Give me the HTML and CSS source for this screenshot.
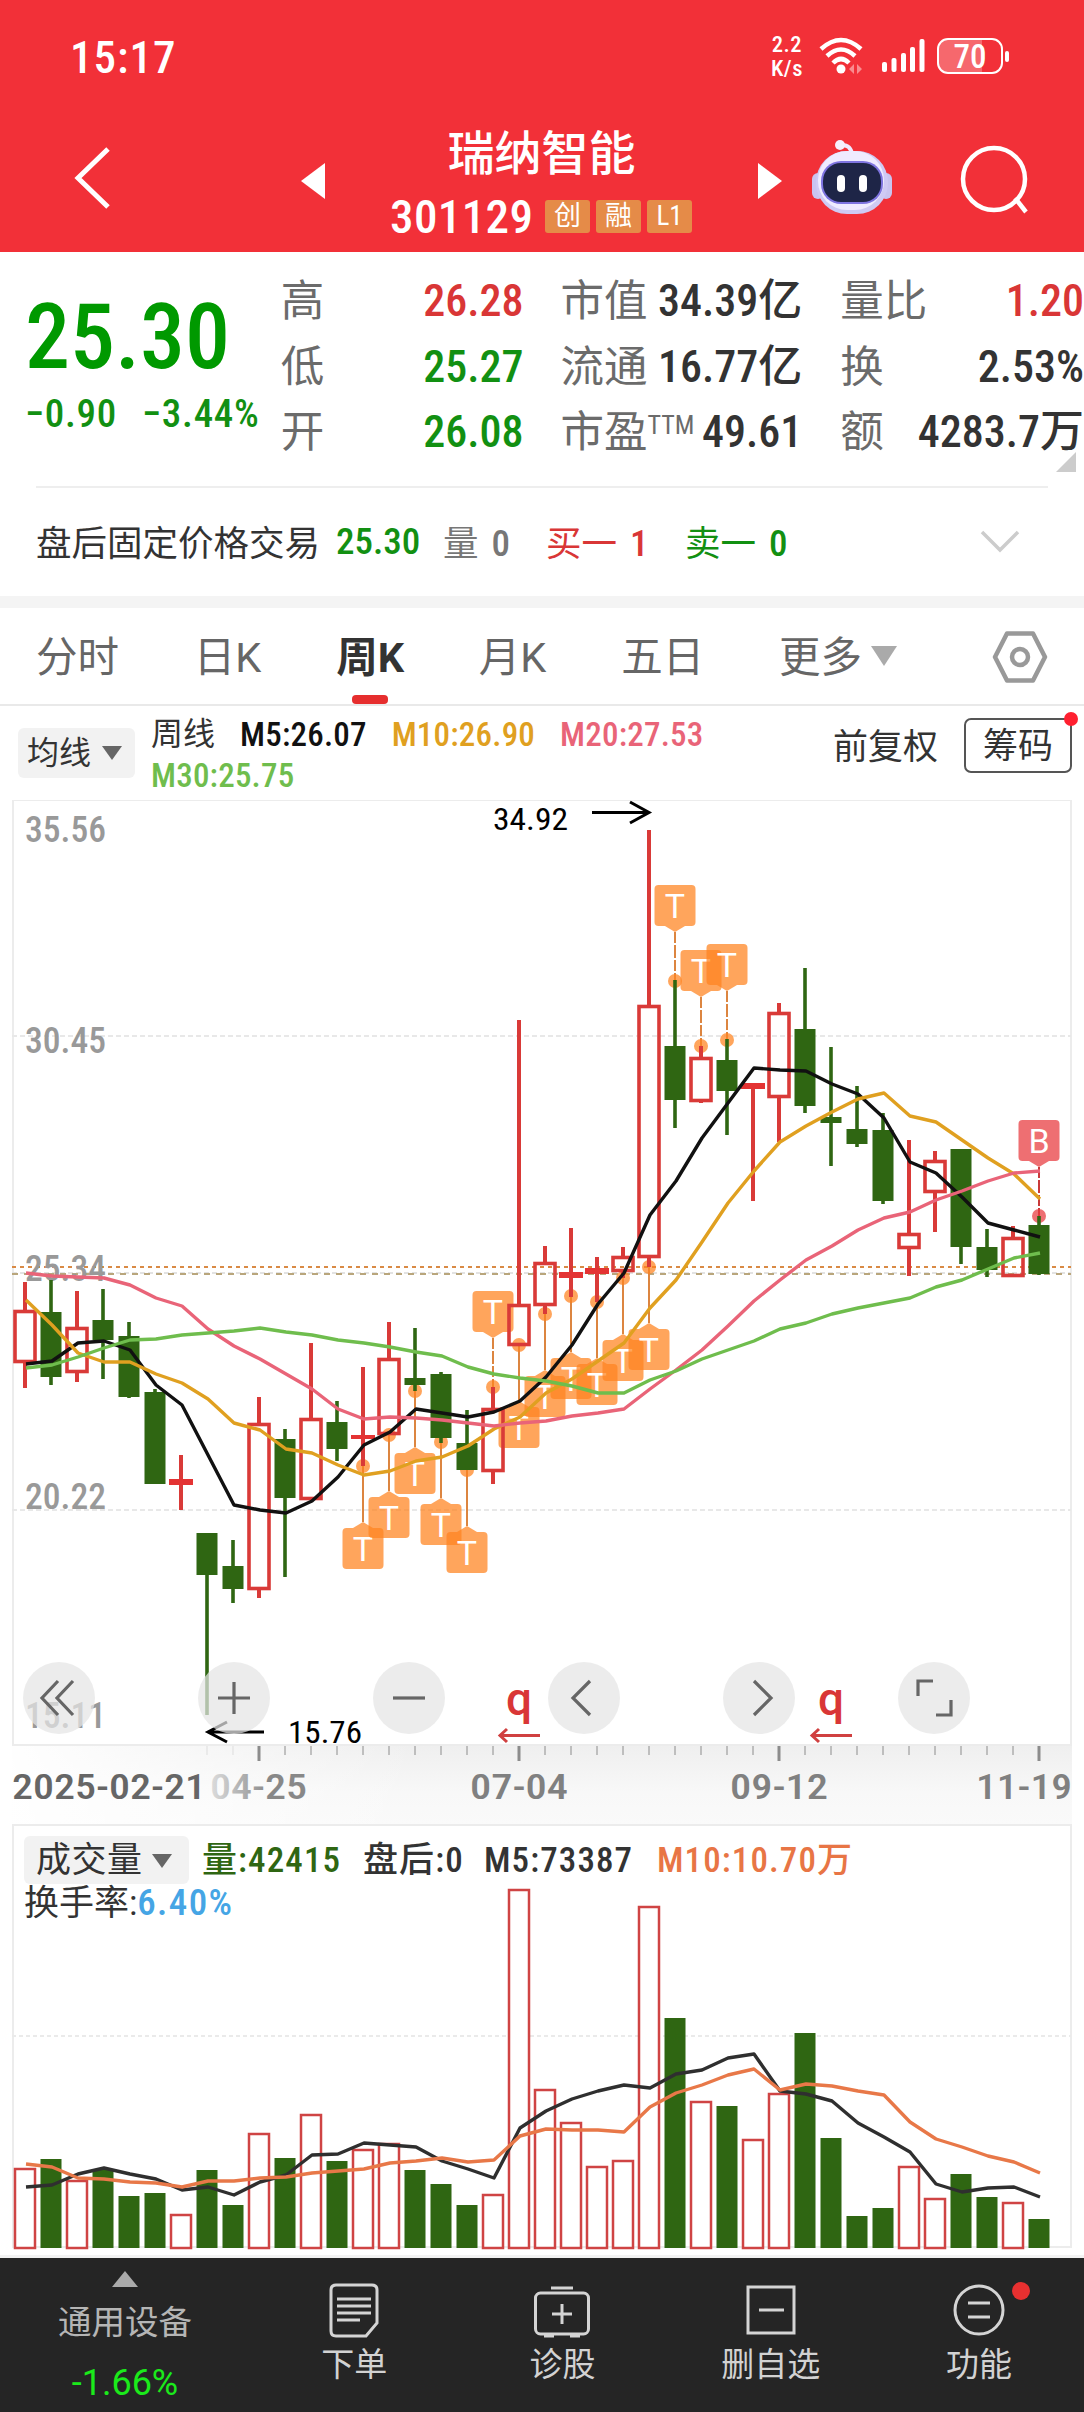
FILE: index.html
```html
<!DOCTYPE html>
<html lang="zh-CN">
<head>
    <meta charset="UTF-8">
    <meta name="viewport" content="width=device-width, initial-scale=1.0">
    <title>瑞纳智能 301129</title>
    <link rel="stylesheet" href="styles.css">
</head>
<body>
    <header class="top">
        <div class="status">
            <span class="time">15:17</span>
            <div class="status-icons">
                <div class="speed"><span>2.2</span><span>K/s</span></div>
                <svg class="wifi" width="46" height="38" viewBox="0 0 46 38">
                    <g fill="none" stroke="#fff" stroke-width="4.5">
                        <path d="M2 12 Q22 -6 42 12"/>
                        <path d="M8 19 Q22 6 36 19"/>
                        <path d="M14 26 Q22 18 30 26"/>
                    </g>
                    <circle cx="22" cy="32" r="4.5" fill="#fff"/>
                    <path d="M35 27v10l-5-5zM38 27v10l5-5z" fill="#f98c8f"/>
                </svg>
                <svg class="signal" width="44" height="36" viewBox="0 0 44 36" fill="#fff">
                    <rect x="0" y="24" width="5" height="10" rx="2"/>
                    <rect x="9.500" y="20" width="5" height="14" rx="2"/>
                    <rect x="19" y="15" width="5" height="19" rx="2"/>
                    <rect x="28" y="9" width="5" height="25" rx="2"/>
                    <rect x="37.500" y="1" width="5" height="33" rx="2"/>
                </svg>
                <div class="battery"><span>70</span></div>
            </div>
        </div>
        <div class="nav">
            <svg class="back" width="40" height="66" viewBox="0 0 40 66"><path d="M36 4 L6 33 L36 62" fill="none" stroke="#fff" stroke-width="5"/></svg>
            <svg class="prev" width="24" height="36" viewBox="0 0 24 36"><path d="M24 0v36L0 18z" fill="#fff"/></svg>
            <div class="stock">
                <h1>瑞纳智能</h1>
                <div class="code"><b>301129</b><i>创</i><i>融</i><i>L1</i></div>
            </div>
            <svg class="next" width="24" height="36" viewBox="0 0 24 36"><path d="M0 0v36l24-18z" fill="#fff"/></svg>
            <svg class="robot" width="82" height="78" viewBox="0 0 82 78">
                <path d="M29 6 Q40 5 41 16" fill="none" stroke="#f1eaff" stroke-width="4"/>
                <circle cx="29" cy="6" r="5" fill="#f6effc"/>
                <rect x="1" y="34" width="12" height="26" rx="6" fill="#c9c4f0"/>
                <rect x="69" y="34" width="12" height="26" rx="6" fill="#c9c4f0"/>
                <rect x="5" y="12" width="72" height="63" rx="31" fill="#cfcaf4"/>
                <rect x="7" y="12" width="66" height="59" rx="29" fill="#efebff"/>
                <rect x="10" y="22" width="62" height="43" rx="20" fill="#7e74e0"/>
                <rect x="12" y="24" width="58" height="39" rx="18" fill="#1e2547"/>
                <rect x="26" y="36" width="8" height="17" rx="4" fill="#fff"/>
                <rect x="48" y="36" width="8" height="17" rx="4" fill="#fff"/>
            </svg>
            <svg class="search" width="70" height="70" viewBox="0 0 70 70" fill="none" stroke="#fff" stroke-width="4.500"><circle cx="34" cy="34" r="31"/><path d="M55 53 L66 67"/></svg>
        </div>
    </header>

    <section class="quote">
        <div class="price">
            <div class="last">25.30</div>
            <div class="change"><span>−0.90</span><span>−3.44%</span></div>
        </div>
        <dl class="col c1">
            <div><dt>高</dt><dd class="red">26.28</dd></div>
            <div><dt>低</dt><dd class="green">25.27</dd></div>
            <div><dt>开</dt><dd class="green">26.08</dd></div>
        </dl>
        <dl class="col c2">
            <div><dt>市值</dt><dd>34.39亿</dd></div>
            <div><dt>流通</dt><dd>16.77亿</dd></div>
            <div><dt>市盈<sup>TTM</sup></dt><dd>49.61</dd></div>
        </dl>
        <dl class="col c3">
            <div><dt>量比</dt><dd class="red">1.20</dd></div>
            <div><dt>换</dt><dd>2.53%</dd></div>
            <div><dt>额</dt><dd>4283.7万</dd></div>
        </dl>
        <span class="corner"></span>
    </section>

    <section class="after">
        <span class="after-title">盘后固定价格交易</span>
        <span class="green after-price">25.30</span>
        <span class="gray after-vol">量<b>0</b></span>
        <span class="red after-buy">买一<b>1</b></span>
        <span class="green after-sell">卖一<b>0</b></span>
        <svg width="40" height="24" viewBox="0 0 40 24"><path d="M2 2 L20 20 L38 2" fill="none" stroke="#ccc" stroke-width="3.500"/></svg>
    </section>

    <nav class="tabs">
        <a>分时</a>
        <a>日K</a>
        <a class="active">周K</a>
        <a>月K</a>
        <a>五日</a>
        <a>更多<span class="down"></span></a>
        <svg width="56" height="54" viewBox="0 0 56 54" fill="none" stroke="#999" stroke-width="4.500"><path d="M15 3.500h26l12 23.500-12 23.500H15L3 27z" stroke-linejoin="round"/><circle cx="28" cy="27" r="8"/></svg>
    </nav>

    <section class="legend">
        <div class="pick">均线<span class="down dark"></span></div>
        <div class="ma">
            <div><span class="ma-name">周线</span><span class="m5">M5:26.07</span><span class="m10">M10:26.90</span><span class="m20">M20:27.53</span></div>
            <div><span class="m30">M30:25.75</span></div>
        </div>
        <div class="adjust">前复权</div>
        <div class="chips">筹码</div>
    </section>

    <svg id="kline" class="kline" width="1084" height="1024" viewBox="0 800 1084 1024"></svg>

    <section class="volume">
        <svg id="vol" width="1084" height="434" viewBox="0 1824 1084 434"></svg>
        <div class="vol-legend">
            <div class="vol-row">
                <div class="pick">成交量<span class="down dark"></span></div>
                <span class="v1">量:42415</span><span class="v2">盘后:0</span><span class="v3">M5:73387</span><span class="v4">M10:10.70万</span>
            </div>
            <div class="turnover">换手率:<span>6.40%</span></div>
        </div>
    </section>

    <footer class="bar">
        <div class="sector">
            <span class="up"></span>
            <span>通用设备</span>
            <span class="pct">-1.66%</span>
        </div>
        <div class="item">
            <svg width="60" height="56" viewBox="0 0 60 56" fill="none" stroke="#d4d4d4" stroke-width="3"><path d="M12 3h36q5 0 5 5v33L42 54H12q-5 0-5-5V8q0-5 5-5z"/><path d="M13 17h34M13 24h34M13 31h34M13 38h23"/></svg>
            下单
        </div>
        <div class="item">
            <svg width="60" height="56" viewBox="0 0 60 56" fill="none" stroke="#d4d4d4" stroke-width="3"><rect x="3.500" y="11" width="53" height="41" rx="5"/><path d="M19 6h22M30 22v20M20 32h20M12 54h10M38 54h10"/></svg>
            诊股
        </div>
        <div class="item">
            <svg width="60" height="56" viewBox="0 0 60 56" fill="none" stroke="#d4d4d4" stroke-width="3"><rect x="7" y="5" width="46" height="46"/><path d="M18 28h25"/></svg>
            删自选
        </div>
        <div class="item">
            <svg width="60" height="56" viewBox="0 0 60 56" fill="none" stroke="#d4d4d4" stroke-width="3"><circle cx="30" cy="28" r="24"/><path d="M19 21h22M19 35h22"/></svg>
            功能
            <span class="dot"></span>
        </div>
    </footer>
    <script src="chart.js"></script>
</body>
</html>
```
FILE: styles.css
```css
body {
    margin: 0;
    width: 1084px;
    height: 2412px;
    overflow: hidden;
    background: #fff;
    color: #333;
    font-family: Roboto, "Noto Sans CJK SC", sans-serif;
    font-stretch: condensed;
    font-size: 36px;
}
svg { display: block; flex: none; }
.red { color: #d93636; }
.green { color: #129012; }
.gray { color: #777; }

/* header */
.top {
    height: 252px;
    background: #f23038;
    color: #fff;
}
.status {
    display: flex;
    justify-content: space-between;
    align-items: center;
    height: 114px;
    padding: 0 81px 0 70px;
    box-sizing: border-box;
}
.time { font-size: 45px; font-weight: 500; letter-spacing: 1px; margin-top: 1px; }
.status-icons { display: flex; align-items: center; margin-top: -3px; }
.speed {
    display: flex;
    flex-direction: column;
    width: 38px;
    font-size: 22.500px;
    line-height: 24px;
    font-weight: 500;
    letter-spacing: .5px;
    text-align: center;
    margin-right: 13px;
}
.wifi { margin-right: 17px; }
.signal { margin-right: 11px; }
.battery {
    position: relative;
    width: 62px;
    height: 32px;
    border: 2px solid #fff;
    border-radius: 11px;
    background: linear-gradient(90deg, #f6686d 70%, #f23038 70%);
    font-size: 33px;
    line-height: 33px;
    font-weight: 500;
    text-align: center;
}
.battery::after {
    content: "";
    position: absolute;
    right: -8px;
    top: 11px;
    width: 4px;
    height: 11px;
    border-radius: 2px;
    background: #fff;
}
.nav {
    display: flex;
    align-items: flex-start;
    height: 138px;
}
.back { margin: 31px 0 0 72px; }
.prev { margin: 49px 0 0 189px; }
.stock { width: 433px; }
.stock h1 {
    margin: 7px 0 0;
    font-size: 47px;
    line-height: 66px;
    font-weight: 500;
    text-align: center;
}
.code {
    display: flex;
    align-items: center;
    height: 60px;
    margin: -1px 0 0 65px;
}
.code b { width: 155px; font-size: 47px; font-weight: 500; letter-spacing: .4px; }
.code i {
    width: 45px;
    height: 33px;
    margin-right: 6px;
    border-radius: 3px;
    background: #e58b48;
    font-size: 27px;
    line-height: 33px;
    font-style: normal;
    text-align: center;
}
.next { margin-top: 49px; }
.robot { margin: 25px 0 0 29px; }
.search { margin: 31px 0 0 67px; }

/* quote */
.quote {
    position: relative;
    display: flex;
    height: 234px;
}
.price { width: 282px; padding-left: 25px; box-sizing: border-box; }
.last {
    margin-top: 39px;
    height: 94px;
    font-size: 90px;
    line-height: 94px;
    font-weight: 500;
    color: #090;
}
.change {
    display: flex;
    gap: 25px;
    margin-top: 6px;
    font-size: 39px;
    line-height: 46px;
    font-weight: 500;
    letter-spacing: .7px;
    color: #129012;
    white-space: nowrap;
}
.col { margin: 17px 0 0; }
.col div {
    display: flex;
    justify-content: space-between;
    align-items: baseline;
    height: 65.500px;
    line-height: 65px;
}
.col dt { font-size: 43.500px; color: #6b6b6b; }
.col dd { margin: 0; font-size: 44px; font-weight: 500; }
.col sup { font-size: 26px; line-height: 0; vertical-align: 13px; }
.c1 { width: 243px; margin-left: -1px; }
.c2 { width: 242px; margin-left: 37px; white-space: nowrap; }
.c3 { width: 244px; margin-left: 38px; }
.corner {
    position: absolute;
    right: 8px;
    bottom: 14px;
    border: 10px solid #ccc;
    border-top-color: transparent;
    border-left-color: transparent;
}
.after {
    display: flex;
    align-items: center;
    height: 110px;
    margin: 0 36px;
    padding-bottom: 4px;
    border-top: 2px solid #eee;
    box-sizing: border-box;
    font-size: 35.500px;
    white-space: nowrap;
}
.after b { font-size: 37px; font-weight: 500; margin-left: 13px; }
.after-title { width: 300px; }
.after-price { width: 107px; font-size: 37px; font-weight: 500; padding-top: 2px; }
.after-vol { width: 103px; }
.after-buy { width: 139px; }
.after-sell { width: 295px; }
.after svg { margin-top: 3px; }

/* tabs */
.tabs {
    display: flex;
    align-items: center;
    height: 110px;
    box-sizing: border-box;
    padding: 10px 36px 4px;
    border-top: 12px solid #f4f4f4;
    border-bottom: 2px solid #e9e9e9;
    font-size: 41.500px;
    font-stretch: normal;
    color: #666;
}
.tabs a { height: 60px; line-height: 58px; position: relative; margin-right: 74.800px; white-space: nowrap; }
.tabs a:nth-child(6) { margin-right: 0; }
.tabs .active { color: #333; font-weight: 700; }
.tabs .active::after {
    content: "";
    position: absolute;
    left: 16px;
    bottom: -15px;
    width: 36px;
    height: 9px;
    border-radius: 4px;
    background: #e62e2e;
}
.tabs svg { margin-left: auto; margin-top: -4px; }
.down {
    display: inline-block;
    border: 13px solid transparent;
    border-top: 20px solid #aaa;
    border-bottom: 0;
    margin-left: 9px;
    vertical-align: 6px;
}
.down.dark { border-width: 14px 10px 0; border-top-color: #666; vertical-align: 4px; }

/* moving averages */
.legend { display: flex; height: 94px; }
.pick {
    flex: none;
    border-radius: 6px;
    background: #f2f2f2;
    white-space: nowrap;
    box-sizing: border-box;
}
.legend .pick {
    width: 117px;
    height: 50px;
    margin: 22px 16px 0 18px;
    padding-left: 9px;
    font-size: 32px;
    line-height: 50px;
}
.legend .pick .down { margin-left: 11px; }
.ma { flex: none; width: 682px; padding-top: 8px; font-size: 33px; font-weight: 500; letter-spacing: .2px; }
.ma div { display: flex; gap: 25px; height: 41px; line-height: 41px; }
.ma .ma-name { font-size: 32px; font-weight: 400; letter-spacing: 0; }
.m5 { color: #111; }
.m10 { color: #e0a020; }
.m20 { color: #e96478; }
.m30 { color: #6fbd4d; }
.adjust { flex: none; width: 131px; font-size: 35px; line-height: 83px; }
.chips {
    position: relative;
    flex: none;
    width: 104px;
    height: 51px;
    margin-top: 12px;
    border: 2px solid #555;
    border-radius: 7px;
    font-size: 35px;
    line-height: 53px;
    text-align: center;
}
.chips::after {
    content: "";
    position: absolute;
    right: -8px;
    top: -8px;
    width: 14px;
    height: 14px;
    border-radius: 50%;
    background: #ff2030;
}

/* volume */
.volume { position: relative; height: 434px; }
.vol-legend {
    position: absolute;
    left: 24px;
    top: 12px;
    font-size: 35px;
    white-space: nowrap;
}
.vol-row { display: flex; height: 48px; line-height: 50px; font-weight: 500; letter-spacing: 1.1px; }
.vol-row .pick { width: 165px; padding-left: 12px; margin-right: 13px; font-weight: 400; letter-spacing: .5px; }
.v1 { width: 161px; color: #2f6612; }
.v2 { width: 121px; }
.v3 { width: 173px; }
.v4 { color: #e87545; }
.turnover { line-height: 37px; }
.turnover span { color: #45a5e5; font-weight: 500; font-size: 37px; letter-spacing: 1.4px; }

/* bottom bar */
.bar {
    display: flex;
    height: 154px;
    background: #252525;
    color: #d2d2d2;
    font-size: 33px;
}
.sector {
    display: flex;
    flex-direction: column;
    align-items: center;
    width: 250px;
    color: #b5b5b5;
    font-size: 33.500px;
    line-height: 60px;
}
.up {
    margin-top: 13px;
    border: 13px solid transparent;
    border-bottom: 16px solid #aaa;
    border-top: 0;
}
.sector span:nth-child(2) { margin-top: 6px; }
.pct { color: #1bea1b; font-size: 36px; font-stretch: normal; }
.item {
    position: relative;
    display: flex;
    flex-direction: column;
    align-items: center;
    width: 208.300px;
    padding-top: 24px;
    line-height: 53px;
}
.dot {
    position: absolute;
    left: 137px;
    top: 24px;
    width: 18px;
    height: 18px;
    border-radius: 50%;
    background: #e83030;
}

/* svg text */
.axis { font-weight: 500; font-size: 36px; fill: #999; }
.date { font-weight: 500; font-size: 35px; fill: #808080; }
.tip { font-size: 31px; fill: #000; }
.mark { font-size: 34px; fill: #fff; text-anchor: middle; font-family: Roboto, sans-serif; font-stretch: normal; }
.ex { font-size: 46px; font-weight: 500; fill: #d93636; text-anchor: middle; font-stretch: normal; }
```
FILE: chart.js
```js
const RED = '#d93a38', GREEN = '#2f6612';
const x = i => 25 + i * 26;

// [type, high, bodyTop, bodyBottom, low]
const candles = [
    ['r',1282,1310,1363,1388],['g',1280,1312,1377,1385],['r',1291,1327,1373,1382],['g',1289,1320,1340,1379],
    ['g',1322,1336,1397,1398],['g',1389,1392,1484,1484],['f',1455,1479,1485,1510],['g',1533,1533,1575,1715],
    ['g',1540,1566,1589,1603],['r',1397,1423,1590,1598],['g',1429,1439,1498,1577],['r',1343,1418,1500,1500],
    ['g',1401,1422,1449,1461],['f',1367,1435,1439,1466],['r',1322,1358,1435,1435],['g',1328,1378,1385,1391],
    ['g',1372,1374,1438,1443],['g',1410,1443,1470,1470],['r',1387,1408,1472,1484],['r',1020,1304,1346,1346],
    ['r',1246,1262,1306,1314],['f',1228,1272,1278,1297],['f',1257,1268,1274,1302],['r',1247,1256,1272,1278],
    ['r',830,1005,1258,1267],['g',980,1046,1100,1128],['r',1046,1057,1102,1103],['g',1039,1060,1091,1135],
    ['f',1083,1083,1089,1201],['r',1003,1012,1098,1142],['g',968,1029,1106,1113],['g',1047,1117,1123,1166],
    ['g',1086,1129,1144,1147],['g',1113,1130,1201,1204],['r',1140,1233,1249,1276],['r',1151,1160,1193,1232],
    ['g',1149,1149,1247,1264],['g',1229,1247,1270,1277],['r',1226,1237,1277,1277],['g',1216,1225,1274,1275]
];
const ma = {
    '#111': [1364,1361,1343,1341,1350,1385,1405,1455,1505,1510,1513,1501,1477,1445,1432,1409,1413,1417,1412,1401,1377,1345,1304,1273,1215,1181,1138,1103,1068,1070,1071,1084,1094,1118,1162,1173,1197,1223,1230,1237],
    '#e0a020': [1300,1325,1353,1362,1362,1374,1383,1399,1423,1430,1449,1453,1465,1475,1471,1461,1457,1446,1429,1417,1393,1379,1361,1343,1308,1280,1242,1203,1171,1142,1126,1112,1099,1093,1116,1122,1140,1158,1174,1199],
    '#e96478': [1273,1276,1277,1278,1285,1298,1306,1329,1346,1359,1374,1389,1409,1419,1417,1418,1420,1423,1426,1423,1421,1416,1413,1409,1389,1370,1350,1326,1301,1280,1260,1246,1230,1218,1212,1200,1191,1181,1173,1171],
    '#6fbd4d': [1368,1365,1357,1348,1340,1339,1335,1333,1331,1328,1332,1335,1340,1343,1347,1352,1356,1367,1374,1378,1381,1386,1393,1393,1380,1371,1359,1350,1341,1329,1323,1314,1308,1303,1298,1287,1280,1269,1258,1253]
};
// trade marks: [index, dot y, 1 = label above, letter]
const marks = [
    [13,1466,0,'T'],[14,1435,0,'T'],[15,1391,0,'T'],[16,1442,0,'T'],[17,1470,0,'T'],[18,1387,1,'T'],
    [19,1345,0,'T'],[20,1314,0,'T'],[21,1296,0,'T'],[22,1302,0,'T'],[23,1278,0,'T'],[24,1267,0,'T'],
    [25,981,1,'T'],[26,1046,1,'T'],[27,1040,1,'T'],[39,1216,1,'B']
];

function polyline(data, color, w) {
    return `<polyline points="${data.map((y, i) => x(i) + 1 + ',' + y).join(' ')}" fill="none" stroke="${color}" stroke-width="${w}" stroke-linejoin="round"/>`;
}
function label(cls, tx, ty, len, str) {
    return `<text class="${cls}" x="${tx}" y="${ty}" textLength="${len}" lengthAdjust="spacingAndGlyphs">${str}</text>`;
}
function dash(y, color, d, x2 = 1071) {
    return `<path d="M12 ${y}H${x2}" stroke="${color}" stroke-width="2" stroke-dasharray="${d}"/>`;
}

let s = `<defs>
    <linearGradient id="sh" x1="0" y1="0" x2="0" y2="1"><stop offset="0" stop-color="#efefef"/><stop offset=".6" stop-color="#f8f8f8"/><stop offset="1" stop-color="#fafafa"/></linearGradient>
    <linearGradient id="fade" x1="0" y1="0" x2="1" y2="0"><stop offset="0" stop-color="#fff"/><stop offset=".25" stop-color="#fff" stop-opacity=".7"/><stop offset="1" stop-color="#fff" stop-opacity="0"/></linearGradient>
    </defs>
    <rect x="12" y="1746" width="1060" height="78" fill="url(#sh)"/>
    <rect x="0" y="1746" width="420" height="78" fill="url(#fade)"/>
    <rect x="13" y="800" width="1058" height="945" fill="none" stroke="#ececec" stroke-width="2"/>`;
s += dash(1036, '#e8e8e8', '5 3') + dash(1273, '#e3e3e3', '5 3') + dash(1510, '#e8e8e8', '5 3');
s += dash(1267, '#d98a45', '4 4') + dash(1274, '#b9a67c', '6 6');
[['35.56', 842], ['30.45', 1053], ['25.34', 1281], ['20.22', 1509], ['15.11', 1728]].forEach(([t, y]) => {
    s += label('axis', 25, y, 81, t);
});

marks.forEach(([i, y, above, t]) => {
    const c = x(i), col = t === 'B' ? '#e83b3e' : '#ff8420', line = t === 'B' ? '#c93a3a' : '#dc8540';
    const top = above ? y - 96 : y + 62;
    s += above ? `<path d="M${c} ${y - 49}V${y}" stroke="${line}" stroke-width="2" stroke-dasharray="11 2 13 2"/>`
               : `<path d="M${c} ${y}V${y + 56}" stroke="${line}" stroke-width="2"/>`;
    s += `<g fill="${col}" opacity=".73"><circle cx="${c}" cy="${y}" r="7"/><rect x="${c - 20.5}" y="${top}" width="41" height="41" rx="4"/>`;
    s += above ? `<path d="M${c - 10} ${top + 41}h20l-10 6z"/>` : `<path d="M${c - 10} ${top}h20l-10 -6z"/>`;
    s += `</g><text class="mark" x="${c}" y="${top + 32.5}">${t}</text>`;
});

candles.forEach(([t, h, a, b, l], i) => {
    const c = x(i);
    if (t === 'r') {
        s += `<path d="M${c} ${h}V${a}M${c} ${b}V${l}" stroke="${RED}" stroke-width="4"/>`;
        s += `<rect x="${c - 10}" y="${a + 1.5}" width="20" height="${b - a - 3}" fill="none" stroke="${RED}" stroke-width="3.6"/>`;
    } else if (t === 'f') {
        s += `<path d="M${c} ${h}V${l}" stroke="${RED}" stroke-width="4"/><rect x="${c - 12}" y="${a}" width="24" height="${b - a}" fill="#e43333"/>`;
    } else {
        s += `<path d="M${c} ${h}V${l}" stroke="${GREEN}" stroke-width="3.6"/><rect x="${c - 10.5}" y="${a}" width="21" height="${b - a}" fill="${GREEN}"/>`;
    }
});
for (const color in ma) s += polyline(ma[color], color, 3.4);

// high and low callouts
s += label('tip', 493, 830, 75, '34.92') + label('tip', 288, 1743, 74, '15.76');
s += '<path d="M592 812.500H649M630 802L649 812.500L630 823M264 1732H208M227 1722L208 1732L227 1742" fill="none" stroke="#000" stroke-width="3"/>';

// ex-dividend marks
[519, 831].forEach(c => {
    s += `<text class="ex" x="${c}" y="1715">q</text><path d="M${c + 21} 1735.500H${c - 19}M${c - 12} 1729l-7 6.500 7 6.500" fill="none" stroke="#d04040" stroke-width="3"/>`;
});

for (let i = 7; i < 40; i++) {
    const big = i % 10 === 9;
    s += `<path d="M${x(i)} 1746V${big ? 1761 : 1755}" stroke="${i < 9 ? '#ddd' : '#8c8c8c'}" stroke-width="${big ? 3 : 1}"/>`;
}
s += label('date', 12, 1799, 194, '2025-02-21').replace('<text', '<text style="fill:#666"');
s += '<linearGradient id="dt" x1="0" x2="1" y1="0" y2="0"><stop offset="0" stop-color="#ddd"/><stop offset=".5" stop-color="#999"/><stop offset=".6" stop-color="#888"/></linearGradient>';
s += label('date', 210, 1799, 97, '04-25').replace('<text', '<text style="fill:url(#dt)"');
s += label('date', 470, 1799, 98, '07-04') + label('date', 730, 1799, 98, '09-12') + label('date', 976, 1799, 96, '11-19');

// round controls
const icons = [
    'M58 1681l-16 17 16 17M73 1681l-16 17 16 17', 'M218 1698h32M234 1682v32', 'M393 1698h32',
    'M590 1681l-17 17 17 17', 'M754 1681l17 17-17 17', 'M918 1696v-15h15M951 1700v15h-15'
];
icons.forEach((d, i) => {
    s += `<circle cx="${59 + i * 175}" cy="1698" r="36" fill="rgba(228,228,228,.72)"/><path d="${d}" fill="none" stroke="#666" stroke-width="3.2"/>`;
});
document.getElementById('kline').innerHTML = s;

// volume: bar tops, type follows the candle
const tops = [2168,2159,2180,2170,2196,2193,2214,2170,2205,2133,2158,2114,2161,2149,2143,2170,2184,2205,2194,1889,2089,2122,2166,2160,1906,2018,2101,2106,2139,2093,2033,2138,2216,2208,2166,2198,2174,2197,2202,2219];
const vm5 = [2187,2185,2174,2168,2174,2179,2190,2187,2195,2182,2175,2155,2154,2143,2145,2147,2161,2169,2178,2128,2111,2099,2091,2085,2088,2074,2070,2058,2054,2091,2094,2101,2123,2137,2152,2184,2192,2188,2187,2197];
const vm10 = [2164,2167,2178,2179,2182,2183,2187,2181,2181,2178,2177,2173,2171,2169,2163,2161,2158,2162,2160,2136,2129,2130,2130,2132,2107,2093,2085,2075,2069,2090,2084,2086,2091,2095,2122,2139,2147,2156,2162,2173];

let v = '<rect x="13" y="1825" width="1058" height="422" fill="none" stroke="#ececec" stroke-width="2"/><rect x="0" y="2255" width="1084" height="3" fill="#f3f3f3"/>' + dash(2036, '#eaeaea', '4 3');
tops.forEach((y, i) => {
    v += candles[i][0] === 'g'
        ? `<rect x="${x(i) - 10.5}" y="${y}" width="21" height="${2248 - y}" fill="${GREEN}"/>`
        : `<rect x="${x(i) - 10}" y="${y + 1}" width="20" height="${2247 - y}" fill="#fff" stroke="#cf4444" stroke-width="2.5"/>`;
});
v += polyline(vm5, '#2f2f2f', 3.4) + polyline(vm10, '#e87848', 3.4);
document.getElementById('vol').innerHTML = v;
```
